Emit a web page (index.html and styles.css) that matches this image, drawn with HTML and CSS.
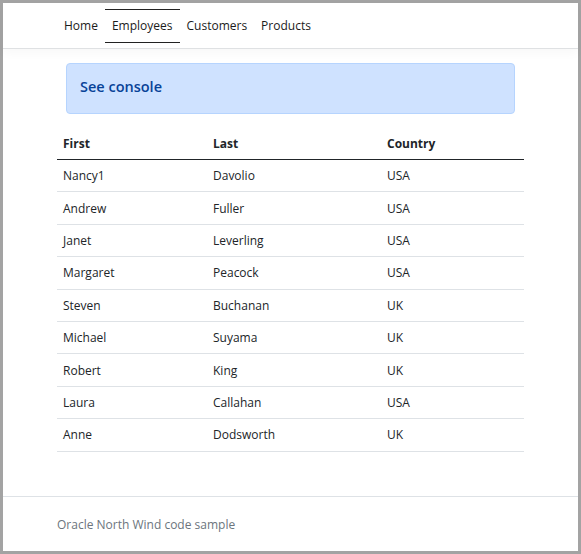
FILE: index.html
```html
<!DOCTYPE html>
<html>
<head>
<meta charset="utf-8">
<link rel="stylesheet" href="styles.css">
</head>
<body>
<div class="frame">
  <header class="navbar">
    <nav class="nav">
      <a class="nav-link" href="#">Home</a>
      <a class="nav-link active" href="#">Employees</a>
      <a class="nav-link" href="#">Customers</a>
      <a class="nav-link" href="#">Products</a>
    </nav>
  </header>
  <main class="main">
    <div class="alert">See console</div>
    <table class="table">
      <thead>
        <tr><th class="c1">First</th><th class="c2">Last</th><th class="c3">Country</th></tr>
      </thead>
      <tbody>
        <tr><td>Nancy1</td><td>Davolio</td><td>USA</td></tr>
        <tr><td>Andrew</td><td>Fuller</td><td>USA</td></tr>
        <tr><td>Janet</td><td>Leverling</td><td>USA</td></tr>
        <tr><td>Margaret</td><td>Peacock</td><td>USA</td></tr>
        <tr><td>Steven</td><td>Buchanan</td><td>UK</td></tr>
        <tr><td>Michael</td><td>Suyama</td><td>UK</td></tr>
        <tr><td>Robert</td><td>King</td><td>UK</td></tr>
        <tr><td>Laura</td><td>Callahan</td><td>USA</td></tr>
        <tr><td>Anne</td><td>Dodsworth</td><td>UK</td></tr>
      </tbody>
    </table>
  </main>
  <footer class="footer">Oracle North Wind code sample</footer>
</div>
</body>
</html>
```
FILE: styles.css
```css
html, body {
  margin: 0;
  padding: 0;
  height: 100%;
}
body {
  font-family: "Open Sans", "Noto Sans", sans-serif;
  font-size: 12px;
  color: #212529;
  background: #a3a3a3;
}
.frame {
  box-sizing: border-box;
  height: 554px;
  border: 3px solid #a3a3a3;
  background: #fff;
  display: flex;
  flex-direction: column;
}
.navbar {
  height: 45px;
  border-bottom: 1px solid #dfe1e3;
  box-shadow: 0 4px 10px rgba(0, 0, 0, 0.03);
  display: flex;
  align-items: center;
  padding-left: 54px;
}
.nav {
  display: flex;
  align-items: center;
}
.nav-link {
  color: #1b1b1b;
  text-decoration: none;
  padding: 0 7px;
  height: 34px;
  line-height: 32px;
  box-sizing: border-box;
  border-top: 1px solid transparent;
  border-bottom: 1px solid transparent;
}
.nav-link.active {
  border-top-color: #222;
  border-bottom-color: #222;
}
.main {
  padding: 14px 54px 0 54px;
}
.alert {
  margin: 0 9px;
  height: 51px;
  box-sizing: border-box;
  background: #cfe2ff;
  border: 1px solid #b6d4fe;
  border-radius: 4px;
  color: #084298;
  font-size: 14.5px;
  font-weight: 600;
  padding: 0 0 5px 13px;
  display: flex;
  align-items: center;
}
.table {
  margin-top: 13px;
  width: 467px;
  border-collapse: collapse;
}
.table th {
  text-align: left;
  font-weight: 700;
  height: 32px;
  padding: 0 6px;
  border-bottom: 1px solid #212529;
}
.table td {
  height: 31.4px;
  padding: 0 6px;
  border-bottom: 1px solid #dee2e6;
}
.c1 { width: 138px; }
.c2 { width: 162px; }
.footer {
  margin-top: auto;
  height: 54px;
  border-top: 1px solid #dee2e6;
  color: #6c757d;
  padding-left: 54px;
  display: flex;
  align-items: center;
}
```
